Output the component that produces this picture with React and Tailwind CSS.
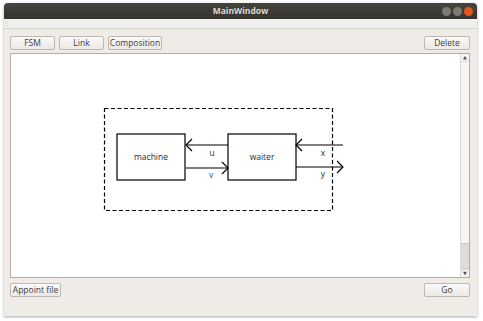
import React from "react";

const font = { fontFamily: "'Open Sans', 'DejaVu Sans', sans-serif" };

const Btn = ({ children, className = "" }) => (
  <button
    className={`h-[14px] rounded-[2px] border border-[#bcb8b2] bg-gradient-to-b from-[#fbfaf9] to-[#ebe8e5] text-[8.5px] leading-none text-[#3c3c3c] ${className}`}
  >
    {children}
  </button>
);

const Diagram = () => (
  <svg width="451" height="223" className="block" style={font}>
    {/* canvas origin = (11,54) */}
    <g transform="translate(-11,-53)" fill="none" stroke="#000" strokeWidth="1.2">
      <rect x="104.5" y="107.5" width="228" height="102" strokeDasharray="4 2.5" />
      <rect x="117" y="133" width="68" height="46" />
      <rect x="228" y="133" width="68" height="46" />
      {/* u: waiter -> machine */}
      <line x1="186" y1="144" x2="228" y2="144" />
      <polyline points="192,138 186,144 192,150" />
      {/* v: machine -> waiter */}
      <line x1="186" y1="167" x2="228" y2="167" />
      <polyline points="222,161 228,167 222,173" />
      {/* x: in */}
      <line x1="296" y1="144" x2="343" y2="144" />
      <polyline points="302,138 296,144 302,150" />
      {/* y: out */}
      <line x1="296" y1="166" x2="343" y2="166" />
      <polyline points="337,160 343,166 337,172" />
      <g stroke="none" fontSize="8.5" textAnchor="middle">
        <text x="151" y="159" fill="#2b2b2b">machine</text>
        <text x="262" y="159" fill="#2b2b2b">waiter</text>
        <text x="212" y="155" fill="#2b2b2b">u</text>
        <text x="211" y="177" fill="#1d4f91">v</text>
        <text x="323" y="155" fill="#2b2b2b">x</text>
        <text x="323" y="176" fill="#2b2b2b">y</text>
      </g>
    </g>
  </svg>
);

export default function App() {
  return (
    <div className="w-[483px] h-[321px] bg-white pt-[3px] pl-[4px] overflow-hidden" style={font}>
      <div className="w-[473px] h-[313px] flex flex-col bg-[#efebe7] shadow-[0_1px_3px_rgba(0,0,0,0.35)] rounded-t-[4px] overflow-hidden">
        {/* title bar */}
        <div className="h-[16px] shrink-0 flex items-center bg-gradient-to-b from-[#45443f] to-[#34332f] px-[4px]">
          <div className="w-[40px]" />
          <div className="flex-1 text-center text-[8.5px] font-bold text-[#dcd8cf] leading-none">MainWindow</div>
          <div className="w-[40px] flex justify-end items-center gap-[2px]">
            <span className="w-[9px] h-[9px] rounded-full bg-[#7c7a74]" />
            <span className="w-[9px] h-[9px] rounded-full bg-[#7c7a74]" />
            <span className="w-[9px] h-[9px] rounded-full bg-[#e6561f]" />
          </div>
        </div>
        {/* menu strip */}
        <div className="h-[10px] shrink-0 bg-[#f1efed] border-b border-[#d6d2cd] flex items-center pl-[2px]">
          <div className="w-[1px] h-[5px] border-l border-dotted border-[#c9c5c0]" />
        </div>
        {/* tool buttons */}
        <div className="flex items-center gap-[4px] pl-[6px] pr-[7px] mt-[7px]">
          <Btn className="w-[45px]">FSM</Btn>
          <Btn className="w-[45px]">Link</Btn>
          <Btn className="w-[54px]">Composition</Btn>
          <div className="flex-1" />
          <Btn className="w-[46px]">Delete</Btn>
        </div>
        {/* canvas */}
        <div className="mt-[3px] ml-[6px] mr-[7px] h-[225px] shrink-0 border border-[#b1ada7] bg-white flex">
          <div className="flex-1 overflow-hidden">
            <Diagram />
          </div>
          <div className="w-[9px] flex flex-col border-l border-[#dedbd7] bg-[#f6f5f4]">
            <div className="h-[8px] flex items-center justify-center border-b border-[#dedbd7]">
              <span className="text-[5px] leading-none text-[#555]">▲</span>
            </div>
            <div className="flex-1 flex flex-col justify-end">
              <div className="h-[26px] bg-[#dedcd9] border-y border-[#cfccc8]" />
            </div>
            <div className="h-[8px] flex items-center justify-center border-t border-[#dedbd7]">
              <span className="text-[5px] leading-none text-[#555]">▼</span>
            </div>
          </div>
        </div>
        {/* bottom buttons */}
        <div className="flex items-center pl-[6px] pr-[7px] mt-[5px]">
          <Btn className="w-[51px]">Appoint file</Btn>
          <div className="flex-1" />
          <Btn className="w-[46px]">Go</Btn>
        </div>
      </div>
    </div>
  );
}
